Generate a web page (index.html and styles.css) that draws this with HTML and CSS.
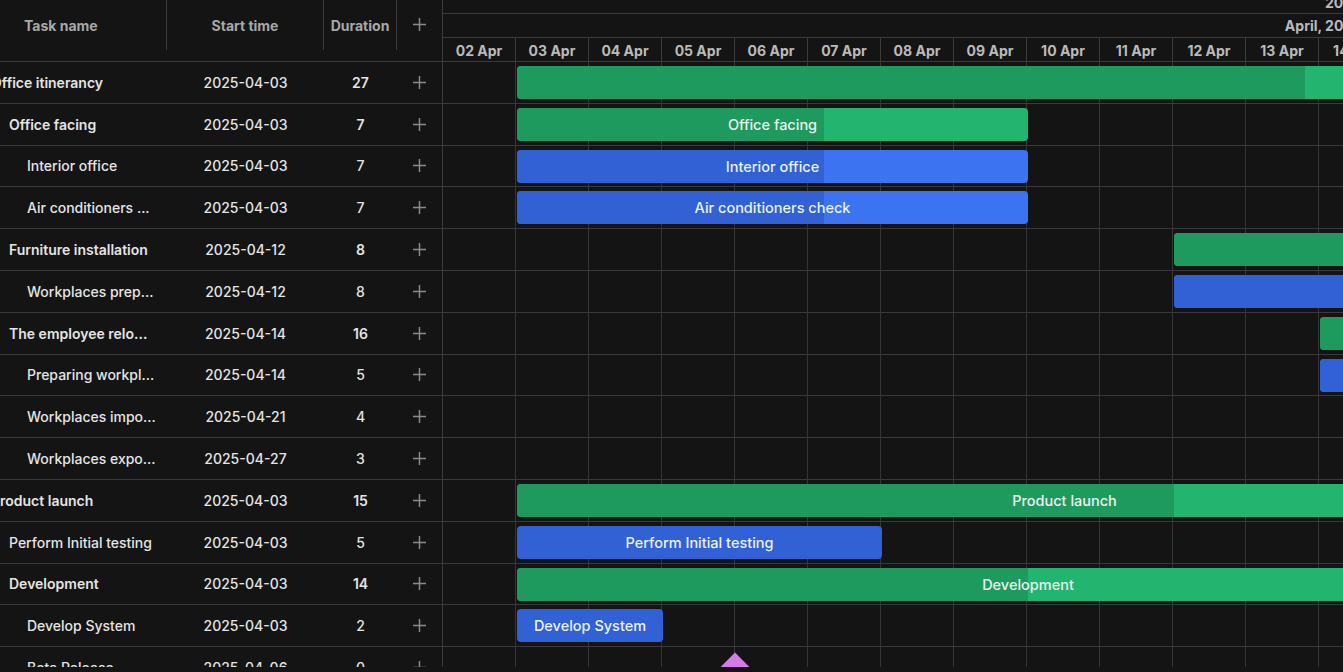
FILE: index.html
```html
<!DOCTYPE html>
<html lang="en">
<head>
	<meta charset="UTF-8">
	<meta name="viewport" content="width=device-width, initial-scale=1.0">
	<title>Office relocation - Gantt</title>
	<link rel="stylesheet" href="styles.css">
</head>
<body>
	<div class="gantt">
		<div class="grid">
			<div class="grid-head">
				<div class="cell col-name">Task name</div>
				<div class="cell col-start">Start time</div>
				<div class="cell col-dur">Duration</div>
				<div class="cell col-add">
					<svg class="plus" viewBox="0 0 14 14"><path d="M7 0v14M0 7h14"/></svg>
				</div>
			</div>
			<div id="gridBody"></div>
		</div>
		<div class="chart">
			<div class="scale">
				<div class="scale-row year-row"><div class="year-cell"><span>2025</span></div></div>
				<div class="scale-row month-row"><div class="month-cell">April, 2025</div></div>
				<div class="scale-row day-row" id="days"></div>
			</div>
			<div id="chartBody"></div>
		</div>
	</div>
	<script>
		// day 2 (02 Apr) is the first visible column
		const firstDay = 2;
		const dayWidth = 73;

		const tasks = [
			{ name: 'Office itinerancy', start: 3, duration: 27, progress: 0.4, level: 0, parent: true, type: 'project' },
			{ name: 'Office facing', start: 3, duration: 7, progress: 0.6, level: 1, parent: true, type: 'project' },
			{ name: 'Interior office', start: 3, duration: 7, progress: 0.6, level: 2, type: 'task' },
			{ name: 'Air conditioners check', short: 'Air conditioners ...', start: 3, duration: 7, progress: 0.6, level: 2, type: 'task' },
			{ name: 'Furniture installation', start: 12, duration: 8, progress: 0.5, level: 1, parent: true, type: 'project' },
			{ name: 'Workplaces preparation', short: 'Workplaces prep...', start: 12, duration: 8, progress: 0.5, level: 2, type: 'task' },
			{ name: 'The employee relocation', short: 'The employee relo...', start: 14, duration: 16, progress: 0.3, level: 1, parent: true, type: 'project' },
			{ name: 'Preparing workplaces', short: 'Preparing workpl...', start: 14, duration: 5, progress: 0.3, level: 2, type: 'task' },
			{ name: 'Workplaces importation', short: 'Workplaces impo...', start: 21, duration: 4, progress: 0, level: 2, type: 'task' },
			{ name: 'Workplaces exportation', short: 'Workplaces expo...', start: 27, duration: 3, progress: 0, level: 2, type: 'task' },
			{ name: 'Product launch', start: 3, duration: 15, progress: 0.6, level: 0, parent: true, type: 'project' },
			{ name: 'Perform Initial testing', start: 3, duration: 5, progress: 1, level: 1, type: 'task' },
			{ name: 'Development', start: 3, duration: 14, progress: 0.5, level: 1, parent: true, type: 'project' },
			{ name: 'Develop System', start: 3, duration: 2, progress: 1, level: 2, type: 'task' },
			{ name: 'Beta Release', start: 6, duration: 0, progress: 0, level: 2, type: 'milestone' }
		];

		const plusIcon = '<svg class="plus" viewBox="0 0 14 14"><path d="M7 0v14M0 7h14"/></svg>';

		function pad(n) {
			return n < 10 ? '0' + n : '' + n;
		}

		function renderScale() {
			const days = document.getElementById('days');
			let html = '';
			for (let d = firstDay; d < firstDay + 16; d++) {
				html += `<div class="day-cell">${pad(d)} Apr</div>`;
			}
			days.innerHTML = html;
		}

		function renderGrid() {
			const body = document.getElementById('gridBody');
			body.innerHTML = tasks.map(t => `
				<div class="row${t.parent ? ' parent' : ''}">
					<div class="cell col-name level-${t.level}">${t.short || t.name}</div>
					<div class="cell col-start">2025-04-${pad(t.start)}</div>
					<div class="cell col-dur">${t.duration}</div>
					<div class="cell col-add">${plusIcon}</div>
				</div>`).join('');
		}

		function renderBars() {
			const body = document.getElementById('chartBody');
			body.innerHTML = tasks.map(t => {
				const left = (t.start - firstDay) * dayWidth + 1;
				if (t.type === 'milestone') {
					return `<div class="row chart-row"><div class="milestone" style="left:${left - 14}px"></div></div>`;
				}
				return `<div class="row chart-row">
					<div class="bar ${t.type}" style="left:${left}px;width:${t.duration * dayWidth}px">
						<div class="bar-progress" style="width:${t.progress * 100}%"></div>
						<div class="bar-text">${t.name}</div>
					</div>
				</div>`;
			}).join('');
		}

		renderScale();
		renderGrid();
		renderBars();
	</script>
</body>
</html>
```

FILE: styles.css
```css
body {
	margin: 0;
	background-color: #141414;
	color: #e4e4e4;
	font-family: Inter, "Noto Sans", sans-serif;
	font-size: 14px;
	font-weight: 500;
	overflow: hidden;
}
.gantt {
	display: flex;
	height: 667px;
	overflow: hidden;
}
.grid {
	flex: 0 0 453px;
	margin-left: -10px;
}
.grid-head {
	display: flex;
	height: 62px;
	border-bottom: 1px solid #3a3a3a;
	box-sizing: border-box;
	color: #a8a8a8;
	font-weight: 700;
}
.grid-head .cell {
	height: 50px;
	border-right: 1px solid #3a3a3a;
}
.grid-head .col-name {
	justify-content: flex-start;
	padding-left: 34px;
}
.cell {
	display: flex;
	align-items: center;
	justify-content: center;
	box-sizing: border-box;
	white-space: nowrap;
	overflow: hidden;
}
.col-name {
	width: 177px;
	justify-content: flex-start;
}
.col-start {
	width: 157px;
}
.col-dur {
	width: 73px;
}
.col-add {
	width: 46px;
	border-right: 1px solid #3a3a3a;
}
.grid-head .col-add {
	height: 61px;
	align-items: flex-start;
	padding-top: 18px;
}
.level-0 {
	padding-left: 1px;
}
.level-1 {
	padding-left: 19px;
}
.level-2 {
	padding-left: 37px;
}
.row {
	display: flex;
	height: 41.8px;
	border-bottom: 1px solid #3a3a3a;
	box-sizing: border-box;
}
.row .cell {
	height: 40.8px;
}
.row.parent .col-name,
.row.parent .col-dur {
	font-weight: 600;
}
.plus {
	width: 13px;
	height: 13px;
	stroke: #8a8a8a;
	stroke-width: 1.6;
	fill: none;
}
.chart {
	flex: 1;
	overflow: hidden;
}
.scale {
	height: 62px;
	color: #bababa;
	font-weight: 700;
}
.scale-row {
	display: flex;
	border-bottom: 1px solid #3a3a3a;
	box-sizing: border-box;
	white-space: nowrap;
}
.year-row {
	height: 14px;
	overflow: hidden;
	align-items: flex-end;
}
.year-cell {
	flex: 0 0 1800px;
	text-align: center;
	line-height: 20px;
}
.month-row {
	height: 24px;
}
.month-cell {
	flex: 0 0 1760px;
	text-align: center;
	line-height: 23px;
}
.day-row {
	height: 24px;
}
.day-cell {
	flex: 0 0 73px;
	box-sizing: border-box;
	border-right: 1px solid #3a3a3a;
	text-align: center;
	line-height: 25px;
}
.chart-row {
	position: relative;
	width: 1168px;
	background-image: repeating-linear-gradient(to right, transparent 0 72px, #363636 72px 73px);
}
.bar {
	position: absolute;
	top: 4px;
	height: 33px;
	border-radius: 4px;
	overflow: hidden;
	color: #eaf3ee;
	font-weight: 500;
}
.bar.project {
	background-color: #22b56f;
}
.bar.project .bar-progress {
	background-color: #1f9a5e;
}
.bar.task {
	background-color: #3b73f1;
}
.bar.task .bar-progress {
	background-color: #3161d5;
}
.bar-progress {
	height: 100%;
}
.bar-text {
	position: absolute;
	inset: 0;
	display: flex;
	align-items: center;
	justify-content: center;
	white-space: nowrap;
	font-size: 14.5px;
}
.milestone {
	position: absolute;
	top: 11px;
	width: 26px;
	height: 26px;
	background-color: #d57be8;
	transform: rotate(45deg);
}
```
